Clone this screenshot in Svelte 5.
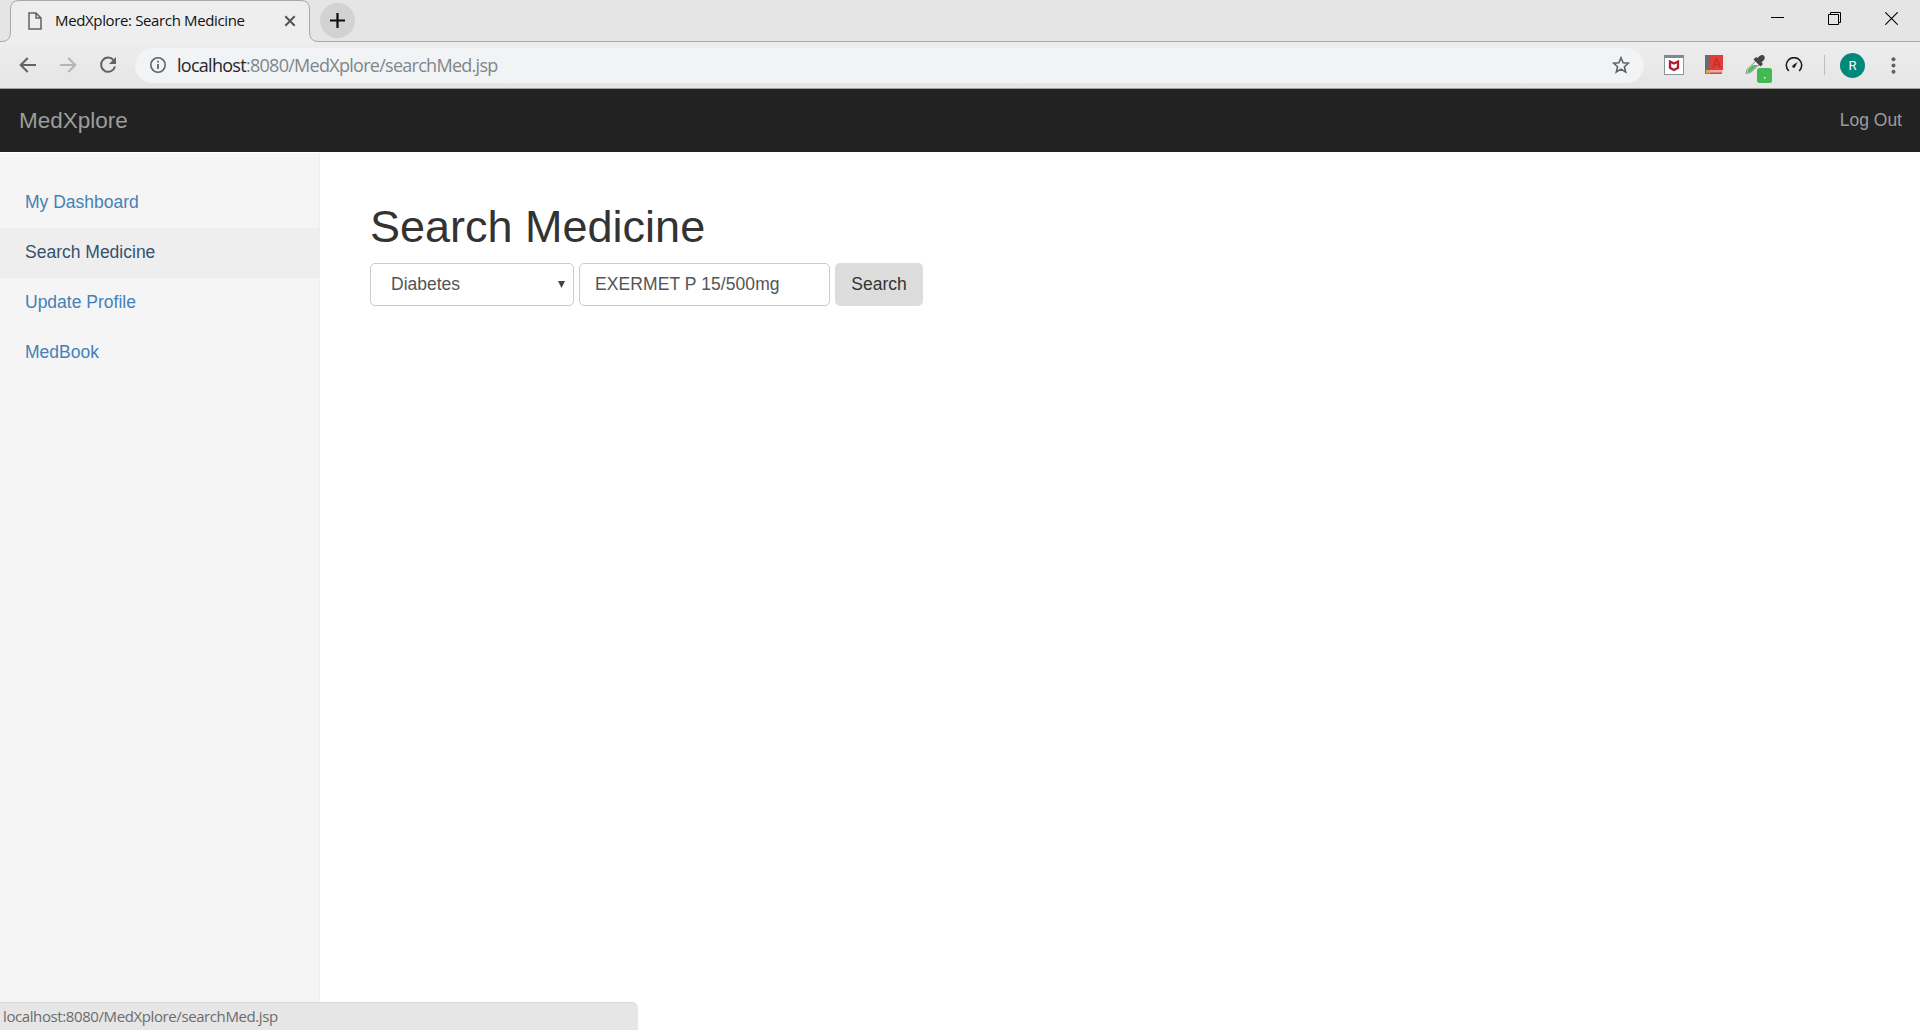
<script>
  const links = ['My Dashboard', 'Search Medicine', 'Update Profile', 'MedBook'];
  let active = $state('Search Medicine');
  let medicine = $state('EXERMET P 15/500mg');
</script>

<div class="window">
  <header class="tabstrip">
    <svg class="tabshape" width="320" height="42" viewBox="0 0 320 42">
      <path d="M0 42V41.5H2Q10.5 41.5 10.5 32V9Q10.5 .5 19 .5H301Q309.500 .5 309.500 9V32Q309.500 41.500 318 41.500H320V42Z" fill="#eeeeee" />
      <path d="M0 41.500H2Q10.500 41.500 10.500 32V9Q10.500 .5 19 .5H301Q309.500 .5 309.500 9V32Q309.500 41.500 318 41.500H320" fill="none" stroke="#a9a9a9" />
    </svg>
    <div class="tab">
      <svg class="page" width="14" height="18" viewBox="0 0 14 18" fill="none" stroke="#5f6368" stroke-width="1.500">
        <path d="M1 1H8L13 6V17H1ZM8 1V6H13" />
      </svg>
      <span class="title">MedXplore: Search Medicine</span>
      <svg class="close" width="12" height="12" viewBox="0 0 12 12" stroke="#505357" stroke-width="2">
        <path d="M1.300 1.300L10.700 10.700M10.700 1.300L1.300 10.700" />
      </svg>
    </div>
    <div class="plus">
      <svg width="15" height="15" viewBox="0 0 15 15" stroke="#0c0c0c" stroke-width="2.200"><path d="M7.500 0V15M0 7.500H15" /></svg>
    </div>
    <div class="controls">
      <svg width="13" height="13" viewBox="0 0 13 13" stroke="#000"><path d="M0 5.500H13" /></svg>
      <svg width="13" height="13" viewBox="0 0 13 13" fill="none" stroke="#000"><path d="M.5 2.500H10.500V12.500H.5ZM2.500 2.500V.5H12.500V10.500H10.500" /></svg>
      <svg width="13" height="13" viewBox="0 0 13 13" stroke="#000" stroke-width="1.100"><path d="M.3 .3L12.700 12.700M12.700 .3L.3 12.700" /></svg>
    </div>
  </header>

  <div class="toolbar">
    <svg class="back" width="18" height="16" viewBox="0 0 18 16" fill="none" stroke="#5f6368" stroke-width="2"><path d="M17 8H2M8.700 1L1.700 8L8.700 15" /></svg>
    <svg class="fwd" width="18" height="16" viewBox="0 0 18 16" fill="none" stroke="#b4b5b7" stroke-width="2"><path d="M0 8H15M8.300 1L15.300 8L8.300 15" /></svg>
    <svg class="reload" width="18" height="18" viewBox="0 0 18 18"><path d="M14.500 4A7.100 7.100 0 1 0 16 10.500" fill="none" stroke="#5f6368" stroke-width="2" /><path d="M17 1V8H10Z" fill="#5f6368" /></svg>
    <div class="omnibox">
      <svg width="18" height="18" viewBox="0 0 18 18"><circle cx="9" cy="9" r="7.200" fill="none" stroke="#5f6368" stroke-width="1.600" /><path d="M8.100 8H9.900V13H8.100ZM8.100 4.800H9.900V6.500H8.100Z" fill="#5f6368" /></svg>
      <span class="url"><b>localhost</b>:8080/MedXplore/searchMed.jsp</span>
      <svg class="star" width="18" height="18" viewBox="0 0 18 18"><path d="M9 1.700L11.100 6.700L16.500 7.100L12.400 10.700L13.700 16L9 13.100L4.300 16L5.600 10.700L1.500 7.100L6.900 6.700Z" fill="none" stroke="#5f6368" stroke-width="1.600" /></svg>
    </div>
    <svg class="shield" width="20" height="20" viewBox="0 0 20 20">
      <rect x=".5" y=".5" width="19" height="19" fill="#fff" stroke="#8b9498" /><path d="M0 0H20V3H0Z" fill="#7c8b94" />
      <path d="M6 6.500L10 8.500L14 6.500V12.800L10 15L6 12.800Z" fill="none" stroke="#b01d2e" stroke-width="2.300" />
    </svg>
    <svg class="book" width="18" height="20" viewBox="0 0 18 20">
      <path d="M0 0H6V19H0Z" fill="#696c75" /><path d="M5 0H18V15H5Z" fill="#df3d38" /><path d="M3 15H17.500V18H3Z" fill="#e9aaa5" /><path d="M3 17.500H17V19H3Z" fill="#d34741" />
      <path d="M8 12.500L11 4H12L15 12.500M9 9.500H14" fill="none" stroke="#c52e2c" stroke-width="1.500" /><path d="M1 15H5V19.500L3 17.500L1 19.500Z" fill="#e3a83d" />
    </svg>
    <svg class="picker" width="27" height="28" viewBox="0 0 27 28">
      <path d="M1 18.500L2 14.500L11.500 5.500L15 9L5.500 17.500Z" fill="#eee" stroke="#88958a" /><path d="M2 17.800L3.500 14L8 10H12.800L5.500 16.800Z" fill="#50bd59" />
      <path d="M8.500 4.500L11 2L12.500 3L14.500 1Q18 -1 19.500 1.500Q20.500 4 17.500 6.500L16.500 7.500L18 9L15.500 11.500Z" fill="#424447" />
      <rect x="12" y="13" width="15" height="15" rx="2.500" fill="#45b853" /><rect x="19" y="22" width="1.500" height="1.500" fill="#e5ffe7" />
    </svg>
    <svg class="gauge" width="18" height="16" viewBox="0 0 18 16"><path d="M3.800 14A7.700 7.700 0 1 1 14.200 14" fill="none" stroke="#1d1d1d" stroke-width="1.600" /><path d="M12.600 5L10.200 9.800A1.500 1.500 0 1 1 8.100 8Z" fill="#1d1d1d" /></svg>
    <i class="divider"></i>
    <span class="avatar">R</span>
    <svg class="dots" width="5" height="17" viewBox="0 0 5 17" fill="#5f6368"><circle cx="2.500" cy="2.200" r="2" /><circle cx="2.500" cy="8.500" r="2" /><circle cx="2.500" cy="14.800" r="2" /></svg>
  </div>

  <nav class="navbar"><span class="brand">MedXplore</span><span class="logout">Log Out</span></nav>

  <div class="body">
    <aside>
      {#each links as link}
        <button class="link" class:active={link === active} onclick={() => (active = link)}>{link}</button>
      {/each}
    </aside>
    <main>
      <h1>Search Medicine</h1>
      <div class="form">
        <div class="select"><span>Diabetes</span><svg width="7" height="7" viewBox="0 0 7 7"><path d="M0 0H7L3.500 7Z" fill="#444" /></svg></div>
        <input bind:value={medicine} spellcheck="false" />
        <button class="search">Search</button>
      </div>
    </main>
  </div>
  <div class="status"><span>localhost:8080/MedXplore/searchMed.jsp</span></div>
</div>

<style>
  :global(body) { margin: 0; overflow: hidden; }
  .window { position: relative; display: flex; flex-direction: column; width: 1920px; height: 1030px; background: #fff; font: 17.5px/25px "Liberation Sans", Arial, sans-serif; overflow: hidden; }
  .window * { box-sizing: border-box; }
  svg { display: block; flex: none; }
  span { white-space: nowrap; }
  .tabstrip { position: relative; display: flex; flex: none; height: 42px; background: #e5e5e5; border-bottom: 1px solid #a9a9a9; }
  .tabshape { position: absolute; left: 0; top: 0; }
  .tab { position: relative; display: flex; align-items: center; width: 320px; height: 41px; padding: 0 24px 0 28px; }
  .title { margin-left: 13px; padding-bottom: 2px; font: 15px/20px "Open Sans", sans-serif; letter-spacing: -0.36px; color: #111; }
  .close { margin-left: auto; }
  .plus { display: flex; align-items: center; justify-content: center; width: 35px; height: 35px; margin-top: 3px; border-radius: 50%; background: #d2d2d2; }
  .controls { display: flex; gap: 44px; margin: 12px 22px 0 auto; }
  .toolbar { display: flex; flex: none; align-items: center; height: 47px; padding-left: 19px; background: linear-gradient(#ededed, #e5e5e5); border-bottom: 1px solid #a0a0a0; }
  .fwd { margin-left: 23px; }
  .reload { margin-left: 21px; }
  .omnibox { display: flex; align-items: center; width: 1509px; height: 35px; margin-left: 18px; padding: 0 14px; border-radius: 18px; background: #f1f3f4; }
  .url { margin-left: 10px; padding-bottom: 1px; font: 18px/24px "Open Sans", sans-serif; letter-spacing: -0.72px; color: #80868b; }
  .url b { font-weight: 400; color: #25272a; }
  .star { margin-left: auto; }
  .shield { margin-left: 20px; }
  .book { margin-left: 21px; }
  .picker { margin: 8px 0 0 22px; }
  .gauge { margin-left: 13px; }
  .divider { width: 1px; height: 20px; margin-left: 21px; background: #bdbdbd; }
  .avatar { width: 25px; height: 25px; margin-left: 15px; border-radius: 50%; background: #00897b; color: #fff; font: 13px/25px Roboto, sans-serif; text-align: center; }
  .dots { margin-left: 26px; }
  .navbar { display: flex; flex: none; align-items: center; justify-content: space-between; height: 63px; padding: 0 18px 0 19px; background: #222; color: #9d9d9d; }
  .brand { padding-bottom: 1px; font-size: 22.5px; }
  .body { display: flex; flex: 1; padding-top: 1px; }
  aside { display: flex; flex-direction: column; width: 320px; padding-top: 25px; background: #f5f5f5; border-right: 1px solid #eee; }
  .link { height: 50px; padding: 0 25px 2px; border: 0; background: none; color: #4580b8; font: inherit; text-align: left; }
  .link.active { background: #eee; color: #34526e; }
  main { padding: 49px 50px; }
  h1 { margin: 0 0 12px; font-size: 45px; line-height: 49px; font-weight: 500; color: #333; }
  .form { display: flex; gap: 5px; color: #555; }
  .select { display: flex; align-items: center; justify-content: space-between; width: 204px; height: 43px; padding: 0 8px 0 20px; border: 1px solid #ccc; border-radius: 5px; }
  input { width: 251px; height: 43px; padding: 0 15px; border: 1px solid #ccc; border-radius: 5px; background: #fff; color: #555; font: inherit; letter-spacing: 0.08px; }
  .search { width: 88px; height: 43px; padding: 0; border: 0; border-radius: 5px; background: #ddd; color: #333; font: inherit; }
  .status { position: absolute; left: 0; bottom: 0; width: 638px; height: 28px; padding: 3px 3px; border-top: 1px solid #dadada; border-radius: 0 6px 0 0; background: #e6e6e6; color: #6c6c6c; font: 15px/20px "Open Sans", sans-serif; letter-spacing: -0.4px; }
</style>
